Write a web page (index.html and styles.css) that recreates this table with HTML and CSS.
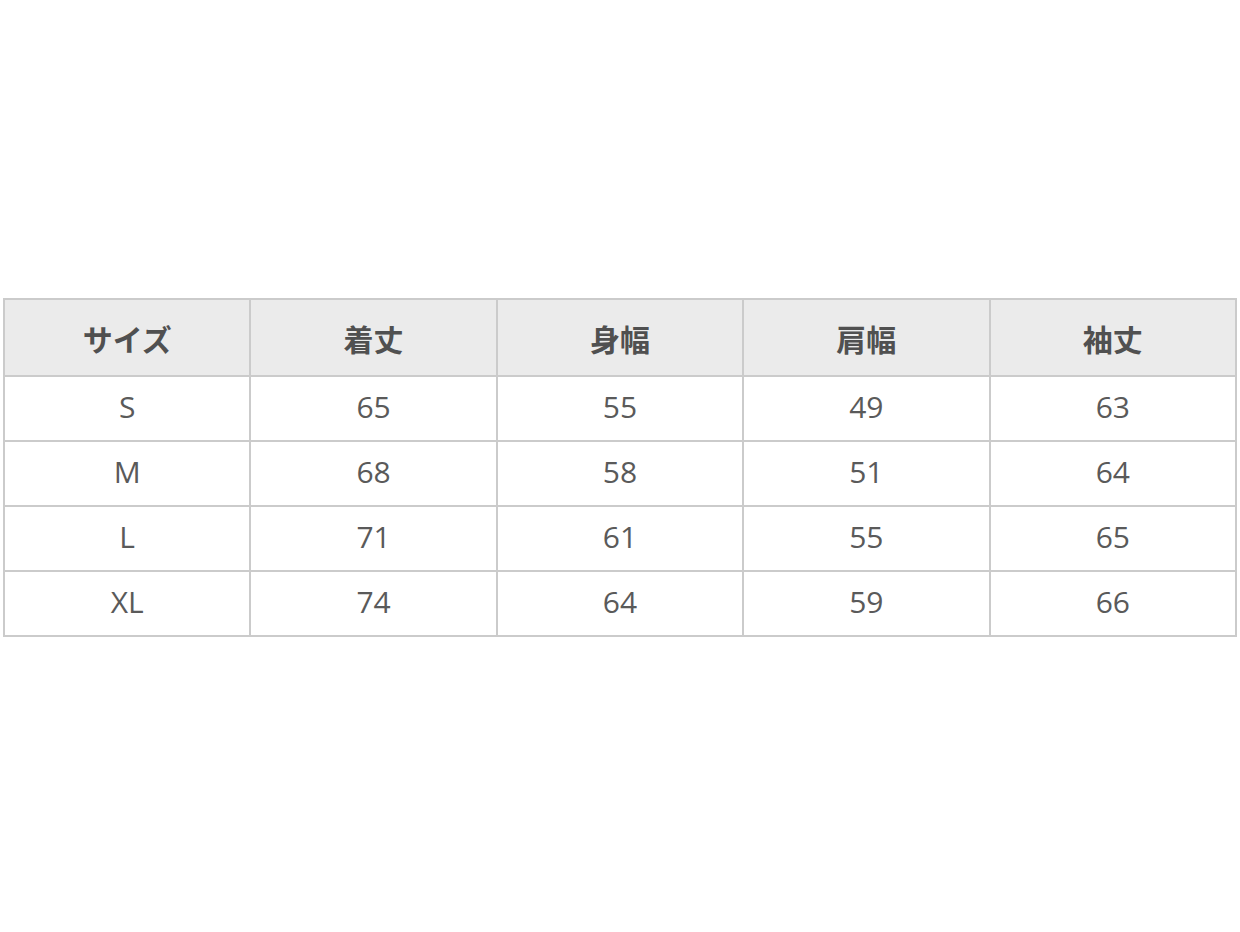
FILE: index.html
```html
<!DOCTYPE html>
<html lang="ja">
<head>
<meta charset="utf-8">
<title>サイズ表</title>
<link rel="stylesheet" href="styles.css">
</head>
<body>
<div class="wrap">
<table class="size-table">
<thead>
<tr><th>サイズ</th><th>着丈</th><th>身幅</th><th>肩幅</th><th>袖丈</th></tr>
</thead>
<tbody>
<tr><td>S</td><td>65</td><td>55</td><td>49</td><td>63</td></tr>
<tr><td>M</td><td>68</td><td>58</td><td>51</td><td>64</td></tr>
<tr><td>L</td><td>71</td><td>61</td><td>55</td><td>65</td></tr>
<tr><td>XL</td><td>74</td><td>64</td><td>59</td><td>66</td></tr>
</tbody>
</table>
</div>
</body>
</html>
```
FILE: styles.css
```css
html, body {
  margin: 0;
  padding: 0;
  background: #fff;
}
.wrap {
  padding: 298px 3px 0 3px;
}
.size-table {
  width: 1234px;
  border-collapse: collapse;
  table-layout: fixed;
  font-family: "Noto Sans CJK JP", "Noto Sans", sans-serif;
  color: #555;
}
.size-table th,
.size-table td {
  border: 2px solid #cbcbcb;
  text-align: center;
  padding: 0;
}
.size-table th {
  background: #ebebeb;
  height: 75px;
  font-size: 30px;
  font-weight: bold;
  color: #505050;
}
.size-table td {
  height: 59px;
  line-height: 1;
  font-family: "Open Sans", "Noto Sans", "Noto Sans CJK JP", sans-serif;
  font-size: 30px;
  font-weight: 400;
  color: #5a5a5a;
  padding-bottom: 4px;
}
```
